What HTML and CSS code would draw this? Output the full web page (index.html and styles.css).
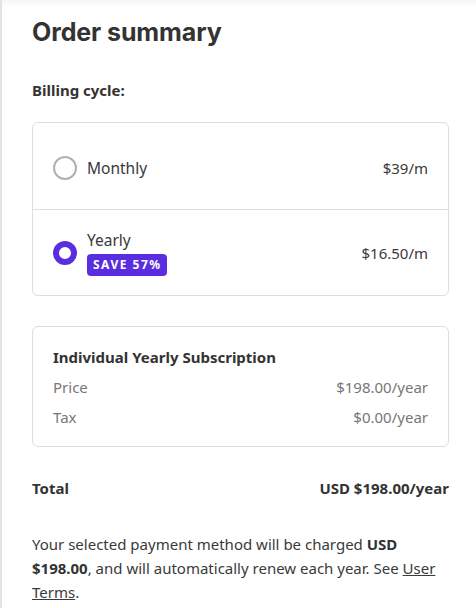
FILE: index.html
```html
<!DOCTYPE html>
<html>
<head>
<meta charset="utf-8">
<link rel="stylesheet" href="styles.css">
</head>
<body>
<div class="panel">
  <h1 class="title">Order summary</h1>
  <h2 class="label">Billing cycle:</h2>
  <div class="card options">
    <div class="option first">
      <span class="radio"></span>
      <div class="opt-name"><span class="opt-text">Monthly</span></div>
      <span class="opt-price">$39/m</span>
    </div>
    <div class="option selected">
      <span class="radio on"></span>
      <div class="opt-name">
        <span class="opt-text">Yearly</span>
        <span class="badge">SAVE 57%</span>
      </div>
      <span class="opt-price">$16.50/m</span>
    </div>
  </div>
  <div class="card details">
    <div class="det-title">Individual Yearly Subscription</div>
    <div class="det-row"><span>Price</span><span>$198.00/year</span></div>
    <div class="det-row"><span>Tax</span><span>$0.00/year</span></div>
  </div>
  <div class="total"><span>Total</span><span>USD $198.00/year</span></div>
  <p class="note">Your selected payment method will be charged <b>USD</b> <b>$198.00</b>, and will automatically renew each year. See <a href="#">User</a> <a href="#">Terms</a>.</p>
</div>
</body>
</html>
```
FILE: styles.css
```css
html, body {
  margin: 0;
  padding: 0;
  background: #fff;
}
body {
  font-family: "Noto Sans", "Open Sans", sans-serif;
  color: #333;
  width: 476px;
  height: 608px;
  overflow: hidden;
}
.panel {
  border-left: 2px solid #e3e3e3;
  box-shadow: inset 0 6px 6px -4px rgba(0,0,0,0.06);
  padding: 15px 27px 0 30px;
  min-height: 608px;
  box-sizing: border-box;
}
.title {
  font-family: "Inter", sans-serif;
  font-weight: 700;
  font-size: 25px;
  letter-spacing: -0.1px;
  color: #333;
  margin: 0;
  line-height: 34px;
}
.label {
  font-size: 15px;
  font-weight: 700;
  margin: 30px 0 0;
  line-height: 22px;
}
.card {
  border: 1px solid #dedede;
  border-radius: 6px;
}
.options {
  margin-top: 21px;
}
.option {
  display: flex;
  align-items: center;
  padding: 0 20px;
  height: 86px;
  box-sizing: border-box;
}
.option.first {
  padding-top: 4px;
}
.option + .option {
  border-top: 1px solid #dedede;
  height: 86px;
}
.radio {
  width: 24px;
  height: 24px;
  border-radius: 50%;
  border: 2px solid #b0b0b0;
  box-sizing: border-box;
  flex: none;
}
.radio.on {
  border: 6px solid #5a2ee0;
}
.opt-name {
  flex: 1;
  margin-left: 10px;
  display: flex;
  flex-direction: column;
  align-items: flex-start;
}
.opt-text {
  font-size: 15.5px;
  line-height: 22px;
  color: #3a3a3a;
}
.option .opt-price {
  font-size: 15px;
  color: #3a3a3a;
}
.badge {
  background: #5a2ee0;
  color: #fff;
  font-size: 12px;
  font-weight: 700;
  letter-spacing: 1.5px;
  border-radius: 4px;
  padding: 0 5px 0 6px;
  line-height: 22px;
  margin-top: 3px;
}
.details {
  margin-top: 30px;
  padding: 19px 20px 14px;
}
.det-title {
  font-size: 15px;
  font-weight: 700;
  line-height: 22px;
  margin-bottom: 4px;
}
.det-row {
  display: flex;
  justify-content: space-between;
  font-size: 15px;
  color: #777;
  line-height: 30px;
}
.total {
  display: flex;
  justify-content: space-between;
  font-size: 15px;
  font-weight: 700;
  margin-top: 30px;
  line-height: 22px;
}
.note {
  font-size: 15px;
  line-height: 24px;
  margin: 33px 0 0;
  color: #3a3a3a;
}
.note b {
  color: #333;
}
.note a {
  color: #3a3a3a;
  text-decoration: underline;
}
```
